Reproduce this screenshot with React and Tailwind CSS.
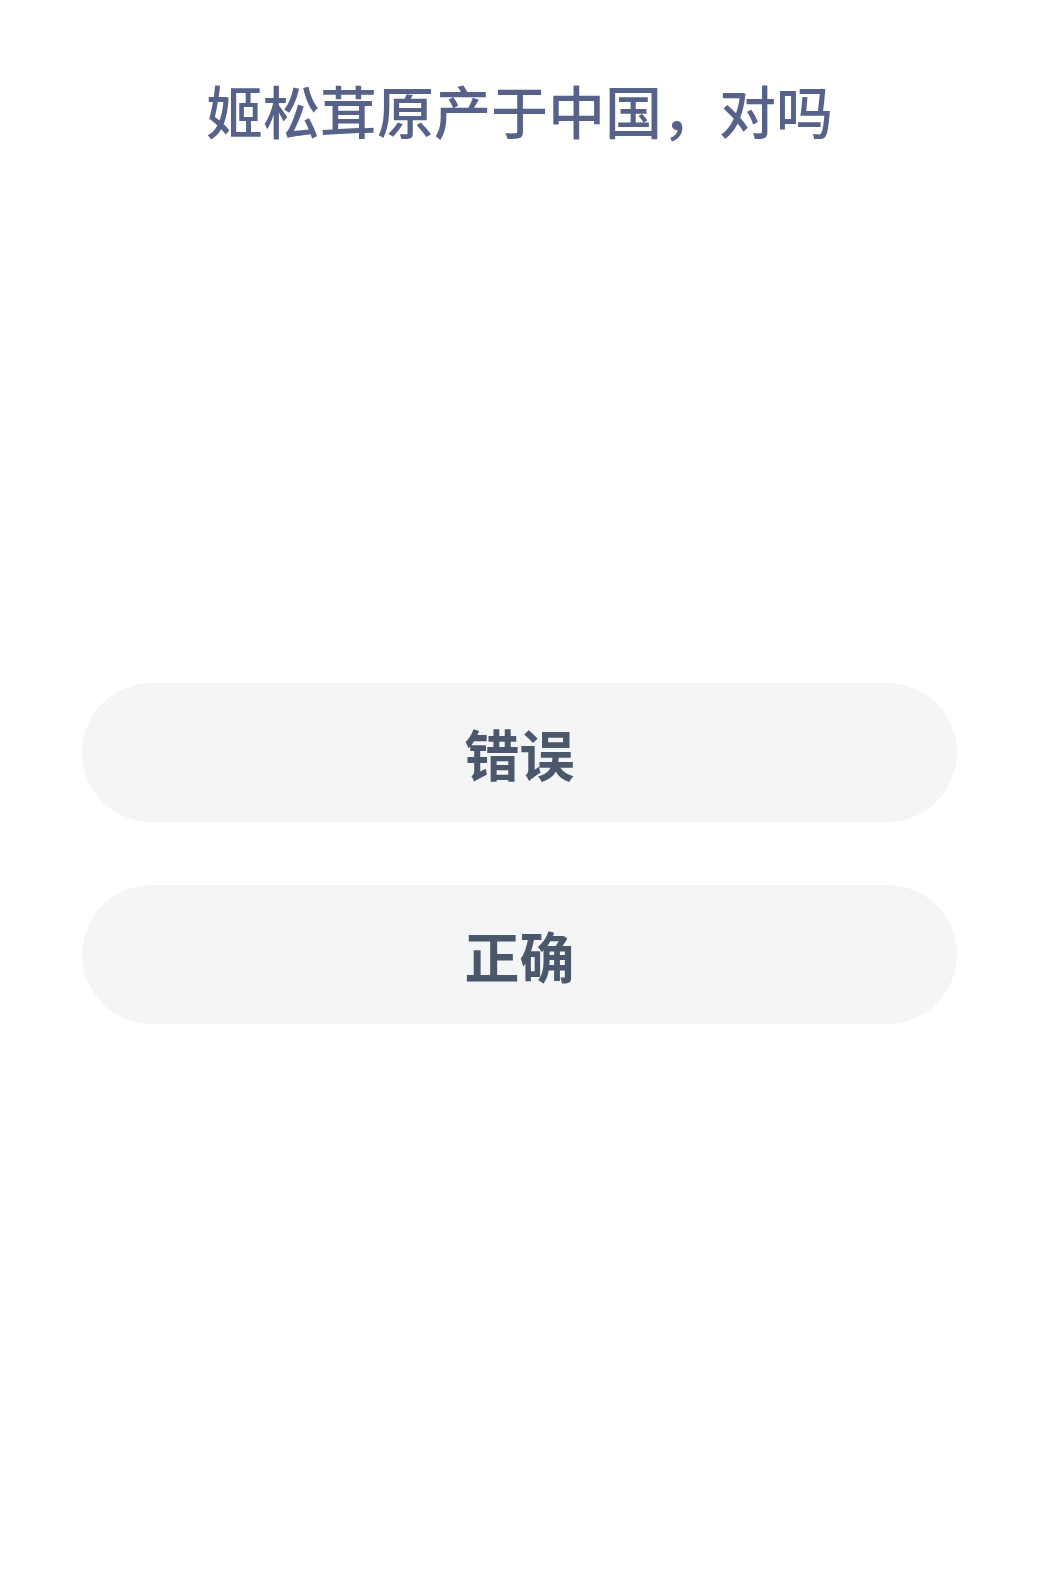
export default function App() {
  const font = { fontFamily: '"Noto Sans CJK SC", "Noto Sans", sans-serif' };
  return (
    <div className="w-[1043px] h-[1583px] bg-white flex flex-col items-center" style={font}>
      <h1 className="mt-[73px] text-[57px] leading-[72px] font-medium text-[#56628a] translate-x-[-2px]">
        姬松茸原产于中国，对吗
      </h1>
      <div className="mt-[538px] w-full pl-[82px] pr-[86px] flex flex-col gap-[63px]">
        <button className="h-[139px] w-full rounded-full bg-[#f4f5f7] text-[55px] font-bold text-[#4b586b] flex items-center justify-center">
          错误
        </button>
        <button className="h-[139px] w-full rounded-full bg-[#f4f5f7] text-[55px] font-bold text-[#4b586b] flex items-center justify-center">
          正确
        </button>
      </div>
    </div>
  );
}
